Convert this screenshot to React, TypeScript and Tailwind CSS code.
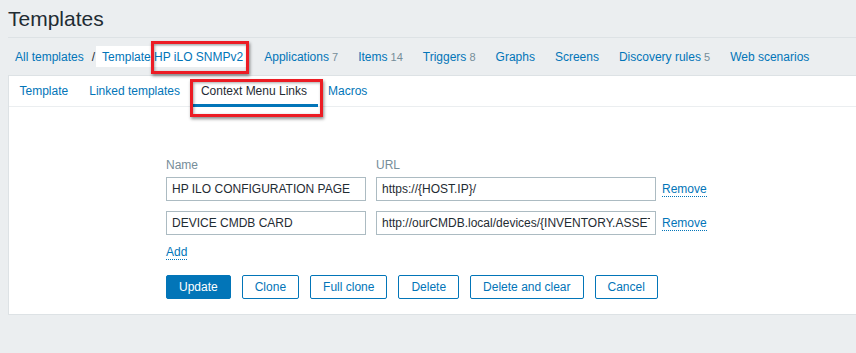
import React from 'react'

const navItems = [
  { label: 'Applications', count: '7' },
  { label: 'Items', count: '14' },
  { label: 'Triggers', count: '8' },
  { label: 'Graphs' },
  { label: 'Screens' },
  { label: 'Discovery rules', count: '5' },
  { label: 'Web scenarios' },
]

const tabs = ['Template', 'Linked templates', 'Context Menu Links', 'Macros']

const links = [
  { name: 'HP ILO CONFIGURATION PAGE', url: 'https://{HOST.IP}/' },
  { name: 'DEVICE CMDB CARD', url: 'http://ourCMDB.local/devices/{INVENTORY.ASSET.TAG}' },
]

const buttons = ['Clone', 'Full clone', 'Delete', 'Delete and clear', 'Cancel']

export default function App() {
  return (
    <div className="relative w-[856px] h-[353px] overflow-hidden bg-[#ebeef0] pl-2 text-[12px] text-[#1f2c33] font-['Liberation_Sans',Arial,sans-serif]">
      {/* Header */}
      <div className="h-[38px] border-b border-[#dde2e5] pt-[7px]">
        <h1 className="text-[21px] leading-[24px]">Templates</h1>
      </div>

      {/* Host navigation */}
      <div className="h-[37px] flex items-center pl-[7px]">
        <div className="flex items-center mr-[15px]">
          <a className="text-[#0275b8]">All templates</a>
          <span className="ml-[8px] mr-[1px]">/</span>
          <span className="bg-white px-[6px] h-[21px] flex items-center text-[#0275b8]">Template HP iLO SNMPv2</span>
        </div>
        <div className="flex items-center gap-[20px]">
          {navItems.map((item) => (
            <span key={item.label} className="text-[#0275b8] whitespace-nowrap">
              {item.label}
              {item.count && <span className="text-[#768d99] text-[11px]"> {item.count}</span>}
            </span>
          ))}
        </div>
      </div>

      {/* Panel */}
      <div className="bg-white border border-[#dde2e5] border-r-0 h-[240px]">
        <div className="h-[31px] border-b border-[#ebeef0] flex">
          {tabs.map((tab) => {
            const active = tab === 'Context Menu Links'
            return (
              <div
                key={tab}
                className={`relative px-[10.5px] flex items-center whitespace-nowrap ${active ? 'text-[#1f2c33]' : 'text-[#0275b8]'}`}
              >
                {tab}
                {active && <span className="absolute left-0 right-0 bottom-[-1px] h-[3px] bg-[#0275b8]" />}
              </div>
            )
          })}
        </div>

        <div className="pl-[157px] pt-[51px]">
          <div className="flex leading-[14px] text-[#768d99]">
            <span className="w-[210px]">Name</span>
            <span>URL</span>
          </div>

          <div className="mt-[5px] flex flex-col gap-[10px]">
            {links.map((link) => (
              <div key={link.name} className="flex items-center">
                <input
                  readOnly
                  defaultValue={link.name}
                  className="w-[200px] h-[24px] border border-[#acbbc2] px-[5px] text-[#1f2c33] outline-none"
                />
                <input
                  readOnly
                  defaultValue={link.url}
                  className="ml-[10px] w-[280px] h-[24px] border border-[#acbbc2] px-[5px] text-[#1f2c33] outline-none"
                />
                <a className="ml-[6px] mt-[1px] leading-[13px] text-[#0275b8] border-b border-dotted border-[#0275b8]">Remove</a>
              </div>
            ))}
          </div>

          <div className="mt-[11px] leading-[13px]">
            <a className="text-[#0275b8] border-b border-dotted border-[#0275b8]">Add</a>
          </div>

          <div className="mt-[16px] flex gap-[11px]">
            <button className="h-[24px] px-[12px] rounded-[2px] bg-[#0275b8] border border-[#0275b8] text-white">Update</button>
            {buttons.map((b) => (
              <button key={b} className="h-[24px] px-[12px] rounded-[2px] bg-white border border-[#0275b8] text-[#0275b8] whitespace-nowrap">
                {b}
              </button>
            ))}
          </div>
        </div>
      </div>

      {/* Annotation boxes */}
      <div className="absolute left-[151px] top-[41px] w-[98px] h-[33px] border-[3px] border-[#ec1c24] shadow-[1px_2px_3px_rgba(0,0,0,0.45),inset_1px_1px_3px_rgba(0,0,0,0.35)]" />
      <div className="absolute left-[190px] top-[79px] w-[133px] h-[38px] border-[3px] border-[#ec1c24] shadow-[1px_2px_3px_rgba(0,0,0,0.45),inset_1px_1px_3px_rgba(0,0,0,0.35)]" />
    </div>
  )
}
